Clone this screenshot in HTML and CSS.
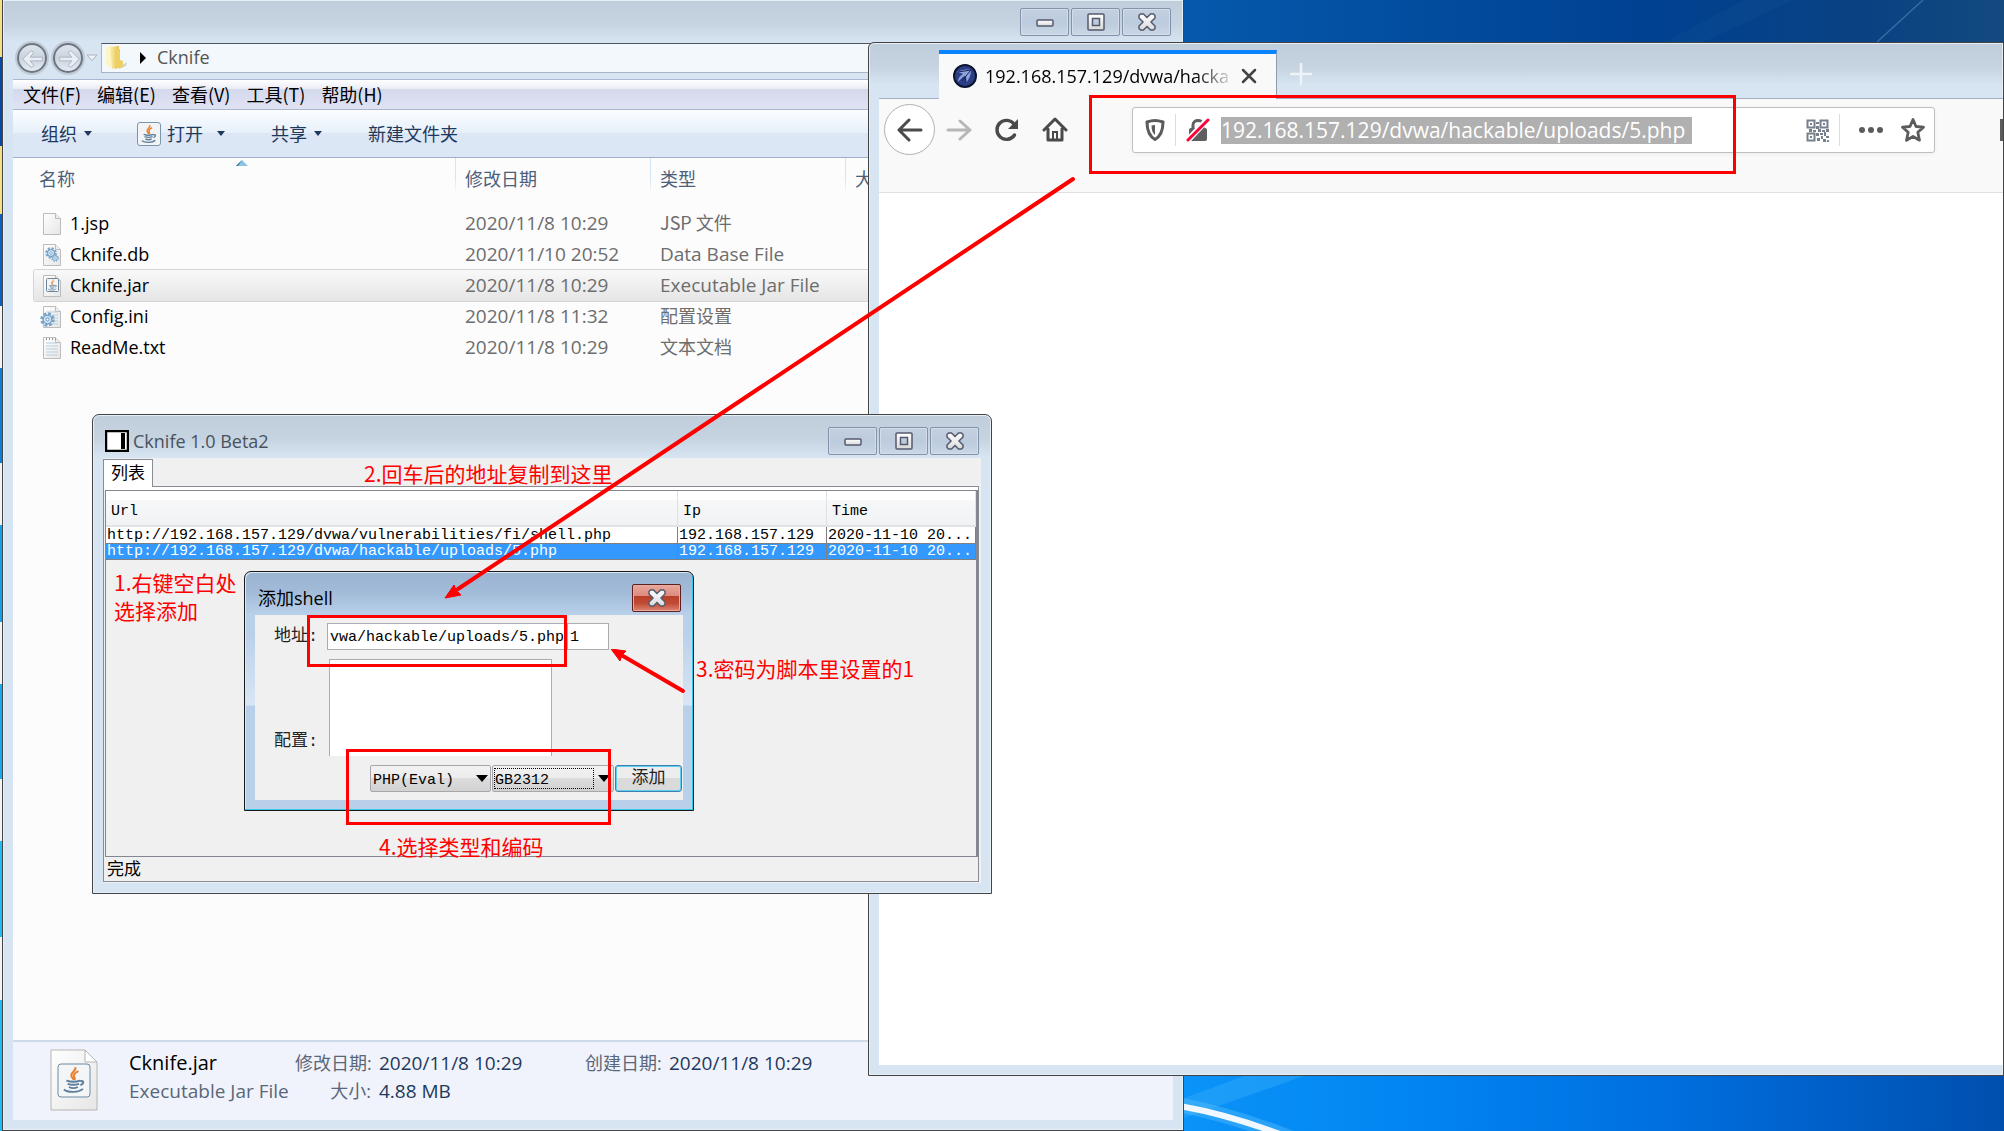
FILE: index.html
```html
<!DOCTYPE html>
<html lang="zh-CN">
<head>
<meta charset="utf-8">
<title>Cknife</title>
<link rel="stylesheet" href="styles.css">
</head>
<body>
<svg class="defs" width="0" height="0" aria-hidden="true">
  <defs>
    <linearGradient id="glyph" x1="0" y1="0" x2="0" y2="1"><stop offset="0" stop-color="#fff"/><stop offset="1" stop-color="#d9d9d9"/></linearGradient>
    <linearGradient id="paper" x1="0" y1="0" x2="1" y2="1"><stop offset="0" stop-color="#fff"/><stop offset="1" stop-color="#e6e6e6"/></linearGradient>
    <linearGradient id="gold" x1="0" y1="0" x2="1" y2="0"><stop offset="0" stop-color="#fbeeae"/><stop offset="1" stop-color="#e5c34a"/></linearGradient>
    <symbol id="i-min" viewBox="0 0 18 18"><rect x="1" y="7" width="16" height="6" rx="1" fill="url(#glyph)" stroke="#555a6e" stroke-width="1.500"/></symbol>
    <symbol id="i-max" viewBox="0 0 18 18"><path d="M1 2q0-1 1-1h14q1 0 1 1v14q0 1-1 1h-14q-1 0-1-1zM5.500 5.500v7h7v-7z" fill="url(#glyph)" fill-rule="evenodd" stroke="#555a6e" stroke-width="1.500"/></symbol>
    <symbol id="i-close" viewBox="0 0 18 18"><path d="M1 2.500l1.500-1.500h3l3.500 3.500 3.500-3.500h3l1.500 1.500v2.500l-4 4 4 4v2.500l-1.500 1.500h-3l-3.500-3.500-3.500 3.500h-3l-1.500-1.500v-2.500l4-4-4-4z" fill="url(#glyph)" stroke="#555a6e" stroke-width="1.500"/></symbol>
    <symbol id="i-cup" viewBox="0 0 20 22">
      <path d="M11 1c1 3-4 4-3 7 .5 1.500 1.500 2 2 3M13.500 4c-2 1-4 2-3.500 4 .3 1 1 1.500.5 3" fill="none" stroke="#e8802e" stroke-width="1.600"/>
      <path d="M4 11.500c3 1 8 1 11 0M5 14c3 1 6 1 9 0M6 16.500c2 1 5 1 7 0M15 12c3-1 3 2 0 3M2 18.500c3 2.500 12 2.500 15-.5" fill="none" stroke="#5d7f9c" stroke-width="1.500"/>
    </symbol>
    <symbol id="i-page" viewBox="0 0 18 22"><path d="M.5.500h12l5 5v16H.5z" fill="url(#paper)" stroke="#bcbcbc"/><path d="M12.500.5v5h5" fill="#eee" stroke="#bcbcbc"/></symbol>
    <symbol id="i-gear" viewBox="0 0 14 14"><circle cx="7" cy="7" r="5.500" fill="none" stroke="#7aa5c8" stroke-width="2.500" stroke-dasharray="2.600 1.700"/><circle cx="7" cy="7" r="4" fill="#dcebf6" stroke="#7aa5c8" stroke-width="1.500"/><circle cx="7" cy="7" r="1.500" fill="#fff" stroke="#7aa5c8"/></symbol>
  </defs>
</svg>

<main class="desktop">
  <svg class="streaks" aria-hidden="true" width="820" height="42" viewBox="0 0 820 42"><path d="M693 42L739 0" stroke="#5c93bf" stroke-width="1.500" opacity=".5"/><path d="M480 42L560 0h50L520 42z" fill="#1b5f9d" opacity=".15"/></svg>
  <svg class="swoosh" aria-hidden="true" width="200" height="55" viewBox="0 0 200 55"><path d="M0 22L60 0h60L0 42z" fill="#38b0fb" opacity=".4"/><path d="M-5 29Q45 38 112 64" fill="none" stroke="#5cc0fc" stroke-width="15" opacity=".4"/><path d="M-5 30Q45 38 112 64" fill="none" stroke="#f2f8ff" stroke-width="6"/></svg>
  <div class="edge-icons"></div>

  <section class="window explorer" aria-label="Cknife">
    <header class="titlebar">
      <div class="controls">
        <button class="ctl" aria-label="最小化"><svg><use href="#i-min"/></svg></button>
        <button class="ctl" aria-label="最大化"><svg><use href="#i-max"/></svg></button>
        <button class="ctl" aria-label="关闭"><svg><use href="#i-close"/></svg></button>
      </div>
    </header>
    <nav class="navrow">
      <div class="travel">
        <button class="round" aria-label="后退"><svg width="28" height="28" viewBox="0 0 30 30"><path d="M4 15l9-9 3 2-4 5h13v4H12l4 5-3 2z" fill="#e9eef4" stroke="#aab3be"/></svg></button>
        <button class="round" aria-label="前进"><svg width="28" height="28" viewBox="0 0 30 30"><path d="M26 15l-9-9-3 2 4 5H5v4h13l-4 5 3 2z" fill="#e9eef4" stroke="#aab3be"/></svg></button>
        <button class="drop" aria-label="最近的页面"><svg viewBox="0 0 12 8"><path d="M1 1h10L6 6.500z" fill="#eef3f8" stroke="#a9b4c0"/></svg></button>
      </div>
      <div class="address">
        <svg width="24" height="26" viewBox="0 0 24 26"><path d="M14 22l8-5-1 4-7 3z" fill="#bbb" opacity=".6"/><path d="M1 2l6-1v22l-6-3z" fill="#fdf5c4"/><path d="M5 2l9-1v21l-7 2z" fill="url(#gold)"/><path d="M10 5l5-1v11l3 1v6l-8 2z" fill="#ecd063"/></svg>
        <svg class="crumb" width="7" height="12" viewBox="0 0 7 12"><path d="M0 0l6 6-6 6z" fill="#000"/></svg>
        <span>Cknife</span>
      </div>
    </nav>
    <div class="client">
      <div class="menubar"><button>文件(F)</button><button>编辑(E)</button><button>查看(V)</button><button>工具(T)</button><button>帮助(H)</button></div>
      <div class="toolbar">
        <button class="organize">组织<i class="caret"></i></button>
        <button class="open"><span class="java"><svg width="18" height="20"><use href="#i-cup"/></svg></span>打开<i class="caret wide"></i></button>
        <button class="share">共享<i class="caret"></i></button>
        <button>新建文件夹</button>
      </div>
      <div class="listing">
        <svg class="sort" width="12" height="7" viewBox="0 0 12 7"><path d="M6 0l6 6H0z" fill="#8ac6e4"/><path d="M6 0L0 6h2z" fill="#2f6f93"/></svg>
        <table class="files">
          <colgroup><col class="c-name"><col class="c-date"><col class="c-type"><col></colgroup>
          <thead><tr><th>名称</th><th>修改日期</th><th>类型</th><th>大小</th></tr></thead>
          <tbody>
            <tr><td><svg class="ficon"><use href="#i-page"/></svg>1.jsp</td><td>2020/11/8 10:29</td><td><span class="cjk">JSP 文件</span></td><td></td></tr>
            <tr><td><svg class="ficon" viewBox="0 0 18 22"><use href="#i-page"/><use href="#i-gear" x="2" y="3" width="12" height="12"/><use href="#i-gear" x="8" y="10" width="8" height="8"/></svg>Cknife.db</td><td>2020/11/10 20:52</td><td>Data Base File</td><td></td></tr>
            <tr class="selected"><td><svg class="ficon" viewBox="0 0 18 22"><use href="#i-page"/><rect x="3.500" y="3.500" width="12" height="13" rx="1" fill="#f4f7fa" stroke="#6d8498"/><use href="#i-cup" x="4" y="4" width="11" height="12"/></svg>Cknife.jar</td><td>2020/11/8 10:29</td><td>Executable Jar File</td><td></td></tr>
            <tr><td><svg class="ficon" viewBox="0 0 18 22"><use href="#i-page"/><path d="M3 6h12M3 9h12M3 12h12M3 15h12M3 18h12" stroke="#b7cfdd"/><use href="#i-gear" x="-3" y="6" width="15" height="15"/></svg>Config.ini</td><td>2020/11/8 11:32</td><td><span class="cjk">配置设置</span></td><td></td></tr>
            <tr><td><svg class="ficon" viewBox="0 0 18 22"><use href="#i-page"/><path d="M3 6h12M3 9h12M3 12h12M3 15h12M3 18h12" stroke="#b7cfdd"/><path d="M3 2h10" stroke="#999" stroke-dasharray="1 2" stroke-width="2"/></svg>ReadMe.txt</td><td>2020/11/8 10:29</td><td><span class="cjk">文本文档</span></td><td></td></tr>
          </tbody>
        </table>
      </div>
      <footer class="details">
        <svg class="bigicon" width="48" height="62" viewBox="0 0 48 62"><path d="M1 1h34l12 13v47H1z" fill="url(#paper)" stroke="#b4b4b4"/><path d="M35 1v12h12z" fill="#fff" stroke="#b4b4b4"/><rect x="8" y="15" width="32" height="33" rx="3" fill="#f3f5f7" stroke="#6d8ba3"/><use href="#i-cup" x="11" y="17" width="26" height="28"/></svg>
        <b class="fname">Cknife.jar</b><span class="lbl">修改日期:</span><span class="val">2020/11/8 10:29</span><span class="lbl">创建日期:</span><span class="val">2020/11/8 10:29</span>
        <span class="ftype">Executable Jar File</span><span class="lbl">大小:</span><span class="val">4.88 MB</span>
      </footer>
    </div>
  </section>

  <section class="window browser" aria-label="浏览器">
    <div class="tabs">
      <div class="tab">
        <svg width="24" height="24" viewBox="0 0 24 24"><circle cx="12" cy="12" r="11" fill="#2c3f86" stroke="#0d1430" stroke-width="2"/><path d="M4 8c4-2 9-3 14-2 0 5-2 9-5 13 1-4 0-6-1-7-3 1-5 4-7 6 0-4 2-6 5-8-2-1-4-2-6-2z" fill="#8fa3dd"/><path d="M5 8l13-2-9 11M12 12l1 7" fill="none" stroke="#16225a"/></svg>
        <span class="tabtitle">192.168.157.129/dvwa/hacka</span>
        <button aria-label="关闭标签页"><svg width="16" height="16" viewBox="0 0 16 16"><path d="M2 2l12 12M14 2L2 14" stroke="#444" stroke-width="2.500" stroke-linecap="round"/></svg></button>
      </div>
      <button class="newtab" aria-label="新标签页"><svg width="22" height="22" viewBox="0 0 22 22"><path d="M11 1v20M1 11h20" stroke="#eef3f8" stroke-width="2.500" stroke-linecap="round"/></svg></button>
    </div>
    <div class="urlrow">
      <button class="back" aria-label="后退"><svg width="26" height="26" viewBox="0 0 26 26"><path d="M24 13H3M12 3L2 13l10 10" fill="none" stroke="#4a4a4c" stroke-width="3" stroke-linecap="round" stroke-linejoin="round"/></svg></button>
      <button class="tool" aria-label="前进"><svg width="26" height="26" viewBox="0 0 26 26"><path d="M2 13h21M14 4l10 9-10 9" fill="none" stroke="#b7b7b8" stroke-width="3" stroke-linecap="round" stroke-linejoin="round"/></svg></button>
      <button class="tool" aria-label="刷新"><svg width="26" height="26" viewBox="0 0 26 26"><path d="M20.500 18A9.500 9.500 0 1 1 20 7" fill="none" stroke="#4a4a4c" stroke-width="3.400" stroke-linecap="round"/><path d="M24 2v10H14z" fill="#4a4a4c"/></svg></button>
      <button class="tool" aria-label="主页"><svg width="26" height="26" viewBox="0 0 26 26"><path d="M2 13L13 2l11 11M6 12v11h14V12" fill="none" stroke="#4a4a4c" stroke-width="3" stroke-linecap="round" stroke-linejoin="round"/><path d="M11 23v-8h4v8" fill="none" stroke="#4a4a4c" stroke-width="2"/></svg></button>
      <div class="urlbar">
        <svg width="20" height="22" viewBox="0 0 20 22"><path d="M10 1.500c3 0 5 .5 8 1.500 0 9-2 14-8 17.500C4 17 2 12 2 3c3-1 5-1.500 8-1.500z" fill="none" stroke="#5b5b5d" stroke-width="3"/><path d="M10 6v10c-2.500-2-3.500-5-3.500-9.500z" fill="#5b5b5d"/></svg>
        <i class="sep"></i>
        <svg class="lock" width="24" height="24" viewBox="0 0 24 24"><path d="M7 11V7c0-6 10-6 10 0v4" fill="none" stroke="#5f5f61" stroke-width="3"/><rect x="3" y="10" width="18" height="13" rx="2" fill="#5f5f61"/><path d="M1 23L22 1" stroke="#fff" stroke-width="6"/><path d="M2 22L22 2" stroke="#ff0039" stroke-width="3" stroke-linecap="round"/></svg>
        <input class="url" aria-label="地址栏" value="192.168.157.129/dvwa/hackable/uploads/5.php">
        <svg class="qr" width="23" height="23" viewBox="0 0 23 23"><path d="M1.500 1.500h7v7h-7zM14.500 1.500h7v7h-7zM1.500 14.500h7v7h-7z" fill="#fff" stroke="#76808c" stroke-width="2"/><path d="M4 4h2v2H4zM17 4h2v2h-2zM4 17h2v2H4zM10 3h3v2h-3zM10 7h3v3h-3zM3 10h3v3H3zM7 11h3v2H7zM12 10h3v3h-3zM16 11h3v2h-3zM20 10h3v3h-3zM10 14h3v3h-3zM14 14h3v2h-3zM18 13h2v4h-2zM11 19h3v3h-3zM15 17h2v3h-2zM20 17h3v2h-3zM17 20h3v3h-3zM21 21h2v2h-2z" fill="#76808c"/></svg>
        <i class="sep"></i>
        <svg class="dots" width="24" height="6" viewBox="0 0 24 6"><circle cx="3" cy="3" r="3"/><circle cx="12" cy="3" r="3"/><circle cx="21" cy="3" r="3"/></svg>
        <svg width="24" height="26" viewBox="0 0 24 26"><path d="M12 2.500l3 7 7.500.7-5.700 5 1.700 8L12 19.500l-6.500 3.700 1.700-8-5.700-5L9 9.500z" fill="none" stroke="#5b5b5d" stroke-width="2.800" stroke-linejoin="round"/></svg>
      </div>
      <i class="library"></i>
    </div>
    <div class="page"></div>
  </section>

  <section class="window cknife" aria-label="Cknife 1.0 Beta2">
    <header class="titlebar">
      <svg width="24" height="22" viewBox="0 0 24 22"><rect x="1" y="1" width="22" height="20" fill="#fff" stroke="#000" stroke-width="2.500"/><path d="M18 3v16" stroke="#000" stroke-width="4"/></svg>
      <h1>Cknife 1.0 Beta2</h1>
      <div class="controls">
        <button class="ctl" aria-label="最小化"><svg><use href="#i-min"/></svg></button>
        <button class="ctl" aria-label="最大化"><svg><use href="#i-max"/></svg></button>
        <button class="ctl" aria-label="关闭"><svg><use href="#i-close"/></svg></button>
      </div>
    </header>
    <div class="swing">
      <button class="listtab">列表</button>
      <div class="panel">
        <div class="grid">
          <table class="shells">
            <colgroup><col><col class="c-ip"><col class="c-ip"></colgroup>
            <thead><tr><th>Url</th><th>Ip</th><th>Time</th></tr></thead>
            <tbody>
              <tr><td>http://192.168.157.129/dvwa/vulnerabilities/fi/shell.php</td><td>192.168.157.129</td><td>2020-11-10 20...</td></tr>
              <tr class="active"><td>http://192.168.157.129/dvwa/hackable/uploads/5.php</td><td>192.168.157.129</td><td>2020-11-10 20...</td></tr>
            </tbody>
          </table>
        </div>
        <div class="status">完成</div>
      </div>
    </div>
  </section>

  <section class="window dialog" role="dialog" aria-label="添加shell">
    <header class="titlebar">
      <h2>添加shell</h2>
      <div class="controls"><button class="ctl red" aria-label="关闭"><svg><use href="#i-close"/></svg></button></div>
    </header>
    <form class="form">
      <div class="line"><label for="addr">地址:</label><input id="addr" class="addr" value="vwa/hackable/uploads/5.php"><input class="pass" aria-label="密码" value="1"></div>
      <div class="line conf"><label for="conf">配置:</label><textarea id="conf"></textarea></div>
      <div class="actions">
        <select aria-label="类型"><option>PHP(Eval)</option></select>
        <span class="focused"><select aria-label="编码"><option>GB2312</option></select></span>
        <button type="button" class="add">添加</button>
      </div>
    </form>
  </section>

  <div class="mark mark-url"></div>
  <div class="mark mark-addr"></div>
  <div class="mark mark-type"></div>
  <svg class="arrow arrow-long" width="632" height="426" viewBox="0 0 632 426" aria-hidden="true"><path d="M629 3L14 413" stroke="#f00" stroke-width="4" stroke-linecap="round"/><path d="M1 422l9-13 2 5 5 5z" fill="#f00" stroke="#f00"/></svg>
  <svg class="arrow arrow-short" width="76" height="46" viewBox="0 0 76 46" aria-hidden="true"><path d="M72 42L12 7" stroke="#f00" stroke-width="4" stroke-linecap="round"/><path d="M0 0l15 2-4 4-2 6z" fill="#f00" stroke="#f00"/></svg>
  <p class="note note-1">1.右键空白处<br>选择添加</p>
  <p class="note note-2">2.回车后的地址复制到这里</p>
  <p class="note note-3">3.密码为脚本里设置的1</p>
  <p class="note note-4">4.选择类型和编码</p>
</main>
</body>
</html>
```

FILE: styles.css
```css
* { box-sizing: border-box; }
html, body { height: 100%; margin: 0; }
body { font: 18px/28px "Open Sans", "Noto Sans CJK SC", sans-serif; color: #000; overflow: hidden; }
button, input, select, textarea { font: inherit; color: inherit; margin: 0; padding: 0; border: 0; background: none; outline: 0; }
button { white-space: nowrap; }
h1, h2, p { margin: 0; font-weight: 400; }
svg { display: block; flex: none; }
i { display: block; flex: none; }
.defs { position: absolute; }

.desktop {
  position: relative; height: 100%; overflow: hidden;
  background:
    linear-gradient(90deg, #0558ab 60%, #004192 82%, #0a4182 93%, #124a80) 0 0 / 100% 42px no-repeat,
    linear-gradient(90deg, #0a93f8 59%, #0286f2 70%, #006fe0 83%, #004fae) 0 0 / 100% 100%;
}
.streaks { position: absolute; top: 0; right: 0; }
.swoosh { position: absolute; left: 1184px; bottom: 0; }
.edge-icons {
  position: absolute; left: 0; top: 0; bottom: 0; width: 2px;
  background: linear-gradient(#f3df86 57px, #0a48a8 57px 146px, #f3df86 146px 214px, #0a60c4 214px 306px, #f4f4f4 306px 368px, #0a80dc 368px 463px, #f4f4f4 463px 525px, #12a0ea 525px 622px, #f4f4f4 622px 684px, #18aaf0 684px 779px, #f4f4f4 779px 841px, #22bcf4 841px 937px, #f4f4f4 937px 1000px, #22bcf4 1000px);
}

/* window frames */
.window {
  position: absolute; display: flex; flex-direction: column; padding: 0 10px 10px;
  border: 1px solid #444; border-radius: 7px 7px 0 0;
  background: linear-gradient(#c0cddb, #c6d3e1 24px, #d7e4f1 42px);
  box-shadow: inset 0 0 0 1px #e6eef6;
}
.titlebar { display: flex; flex: none; align-items: center; height: 43px; padding: 8px 2px 0; color: #48525e; }
.controls { display: flex; gap: 2px; margin-left: auto; }
.ctl {
  display: grid; place-items: center; width: 49px; height: 28px;
  border: 1px solid #8391aa; border-radius: 2px;
  background: linear-gradient(#c3d0e0, #bccbdd 50%, #c9d7e6);
  box-shadow: inset 0 0 0 1px #d3deea;
}
.ctl svg { width: 18px; height: 18px; }
.ctl.red { border-color: #5c1f22; background: linear-gradient(#e8a79c, #dd8b7e 42%, #b93f27 44%, #c24a35 70%, #dc8570); box-shadow: inset 0 0 0 1px #e9ab9f; }

/* file explorer */
.explorer { left: 2px; top: 0; bottom: 0; width: 1182px; border-top: 0; border-radius: 0; }
.explorer .titlebar { align-items: flex-start; }
.navrow { display: flex; flex: none; height: 36px; }
.travel { display: flex; width: 88px; height: 30px; align-items: center; padding-left: 4px; gap: 6px; }
.round { display: grid; place-items: center; width: 30px; height: 30px; border: 2px solid #6d7680; border-radius: 50%; background: linear-gradient(#dfe5ec, #c9d3de 50%, #e4ebf3); box-shadow: 0 0 0 2px #bfcad6; }
.drop { width: 12px; margin-left: -3px; }
.address { display: flex; flex: 1; align-items: center; height: 30px; padding-left: 3px; border: 1px solid #a9b5c2; border-top-color: #4d565f; background: #f3f8fc; color: #545454; line-height: 26px; }
.address span { padding-bottom: 2px; }
.crumb { margin: 0 10px 0 11px; }
.client { display: flex; flex: 1; flex-direction: column; min-height: 0; background: #fcfcfc; }
.menubar { display: flex; flex: none; align-items: flex-start; gap: 16px; height: 31px; padding: 0 10px; border: solid #a9b8cf; border-width: 1px 0; background: linear-gradient(#fff, #e9ecf5 9px, #d5d9ec 9px, #dfe3f3); font-family: "Noto Sans CJK SC", sans-serif; }
.toolbar { display: flex; flex: none; height: 48px; padding-left: 28px; border-bottom: 1px solid #a0afc8; background: linear-gradient(#fbfdff, #e6f0fa 23px, #dce6f4 23px, #dce7f5); color: #1e395b; }
.toolbar button { display: flex; align-items: center; }
.caret { border: 4px solid transparent; border-top: 5px solid #1e395b; border-bottom: 0; margin-left: 7px; }
.caret.wide { margin-left: 14px; }
.organize { margin-right: 45px; }
.open { margin-right: 46px; }
.share { margin-right: 46px; }
.java { display: grid; place-items: center; width: 24px; height: 24px; margin-right: 6px; border: 1px solid #7d95aa; border-radius: 3px; background: #f3f4f6; }
.listing { position: relative; flex: 1; padding-left: 21px; }
.sort { position: absolute; left: 223px; top: 2px; }
.files { width: 100%; table-layout: fixed; border-spacing: 0; }
.c-name { width: 421px; }
.c-date, .c-type { width: 195px; }
.files th { height: 50px; padding: 7px 0 0 10px; vertical-align: top; text-align: left; font-weight: 400; color: #4c607a; background: linear-gradient(#d5e4f2, #d5e4f2 20px, transparent 36px) 0 0 / 1px 100% no-repeat; }
.files th:first-child { padding-left: 5px; background: none; }
.files td { height: 31px; padding: 0 0 0 10px; line-height: 29px; font-size: 19px; color: #6d6d6d; white-space: nowrap; }
.files td:first-child { padding-left: 36px; font-size: 18px; color: #000; position: relative; }
.cjk { font: 18px "Noto Sans CJK SC", sans-serif; }
.ficon { position: absolute; left: 9px; top: 5px; width: 18px; height: 22px; overflow: visible; }
.selected { background: linear-gradient(#f9f9f9, #e5e5e5); box-shadow: 0 0 0 1px #d5d5d5; border-radius: 2px; }
.details { display: grid; flex: none; grid-template: 28px 28px / 79px 166px 84px 206px 84px 1fr; height: 80px; padding: 7px 0 0 37px; border-top: 2px solid #ccdaea; background: #f0f3fb; line-height: 28px; white-space: nowrap; }
.bigicon { grid-row: span 2; }
.fname { font-size: 20px; font-weight: 400; }
.ftype { font-size: 19px; }
.ftype, .lbl { color: #5a6779; }
.lbl { padding-right: 8px; text-align: right; }
.val { font-size: 19px; color: #1e395b; }

/* browser */
.browser { left: 868px; right: 0; top: 42px; bottom: 55px; padding-right: 0; border-radius: 6px 0 0 0; }
.tabs { display: flex; flex: none; height: 56px; padding: 7px 0 0 60px; border-bottom: 1px solid #a3afc3; }
.tab { display: flex; align-items: center; width: 338px; height: 49px; padding: 0 0 2px 14px; border-top: 4px solid #0a84ff; border-right: 1px solid #8f9bab; background: #f9f9fa; }
.tabtitle { width: 250px; margin: 0 6px 0 8px; white-space: nowrap; -webkit-mask-image: linear-gradient(90deg, #000 210px, transparent); mask-image: linear-gradient(90deg, #000 210px, transparent); }
.newtab { margin-left: 13px; height: 48px; }
.urlrow { display: flex; flex: none; align-items: flex-start; height: 94px; padding: 5px 0 0 5px; border-bottom: 1px solid #e0e0e1; background: #f9f9fa; }
.back { display: grid; place-items: center; width: 51px; height: 51px; margin-right: 10px; border: 1px solid #b1b1b3; border-radius: 50%; background: #fff; }
.tool { display: grid; place-items: center; width: 28px; height: 51px; margin-right: 20px; }
.urlbar { display: flex; flex: 1; align-items: center; height: 46px; margin: 3px 65px 0 43px; padding: 0 9px 0 12px; border: 1px solid #bfbfc1; border-radius: 3px; background: #fff; box-shadow: 0 1px 4px #0000000d; }
.sep { width: 1px; height: 32px; margin-left: 10px; background: #dcdcdd; }
.lock { margin: 0 11px 0 10px; }
.url { width: 471px; height: 27px; background: #b0b0b0; color: #fff; font-size: 21px; line-height: 27px; }
.qr { margin-left: auto; }
.dots { margin: 0 18px 0 19px; fill: #5b5b5d; }
.library { width: 3px; height: 22px; margin-top: 15px; background: #5b5b5d; }
.page { flex: 1; background: #fff; }

/* Cknife main window */
.cknife { left: 92px; top: 414px; width: 900px; height: 480px; }
.titlebar h1, .titlebar h2 { margin-left: 4px; font-size: 18px; line-height: 28px; }
.cknife .controls { padding-top: 1px; }
.swing { display: flex; flex: 1; flex-direction: column; align-items: stretch; min-height: 0; padding: 1px 2px 1px 0; background: #f0f0f0; font: 15px/16px "Liberation Mono", "Noto Sans CJK SC", monospace; }
.listtab { position: relative; z-index: 1; width: 50px; height: 28px; padding-top: 2px; border: 1px solid #898c95; border-bottom: 0; background: #fff; font-size: 17px; }
.panel { display: flex; flex: 1; flex-direction: column; margin-top: -1px; padding: 3px 0 0 1px; border: 1px solid #898c95; background: linear-gradient(#fff 4px, #f0f0f0 4px); }
.grid { flex: 1; border: 1px solid #828790; border-right-width: 2px; }
.shells { width: 100%; table-layout: fixed; border-spacing: 0; }
.c-ip { width: 149px; }
.shells th { height: 36px; padding: 8px 0 0 5px; text-align: left; font-weight: 400; border-right: 1px solid #dfe1e4; border-bottom: 2px solid #e0e2e5; background: linear-gradient(#fff 9px, #f7f8fa 9px, #f1f2f4); }
.shells td { height: 16px; padding: 0 1px; overflow: hidden; line-height: 15px; white-space: nowrap; border-bottom: 1px solid #808080; border-right: 1px solid #808080; background: #fff; }
.shells tbody tr:first-child td { height: 17px; padding-top: 1px; }
.shells .active td { background: #39f; color: #fff; }
.status { flex: none; height: 24px; padding-left: 2px; line-height: 27px; font-size: 17px; }

/* dialog */
.dialog { left: 244px; top: 571px; width: 450px; height: 240px; border-color: #1a1a1a; background: linear-gradient(#9ab3d0, #a3bcd9 22px, #b9d0ea 42px, #b9d0ea 60px, #d9e6f5 133px, #b9d0ea 134px); box-shadow: inset -1px -1px #33c7e8, inset 1px 1px #dbe8f5; }
.dialog .titlebar { color: #000; }
.dialog .titlebar h2 { margin-left: 1px; }
.dialog .controls { padding-top: 1px; }
.form { flex: 1; padding: 8px 1px 0 19px; background: #f0f0f0; font: 15px/25px "Liberation Mono", "Noto Sans CJK SC", monospace; color: #222; }
.line { display: flex; }
.line label { width: 53px; font-size: 17px; line-height: 28px; }
.addr, .pass { height: 27px; padding: 2px 0 0 2px; border: 1px solid #abadb3; background: #fff; color: #000; }
.addr { width: 240px; }
.pass { width: 42px; }
.conf { align-items: flex-end; height: 97px; margin-top: 8px; }
.conf label { width: 55px; }
.conf textarea { width: 223px; height: 97px; border: 1px solid #abadb3; border-bottom: 0; background: #fff; resize: none; }
.actions { display: flex; justify-content: flex-end; gap: 1px; margin-top: 9px; }
.actions select {
  width: 121px; height: 27px; padding: 2px 0 0 2px; appearance: none; border: 1px solid #a6a6ac; border-radius: 2px; color: #000;
  background:
    url("data:image/svg+xml,%3Csvg xmlns='http://www.w3.org/2000/svg' width='12' height='7'%3E%3Cpath d='M0 0h12L6 7z'/%3E%3C/svg%3E") right 2px center / 12px 7px no-repeat,
    linear-gradient(#f3f3f3, #ebebeb 50%, #dcdcdc 50%, #d2d2d2);
}
.focused { position: relative; display: flex; }
.actions .focused select { width: 122px; background-position: right 3px center, 0 0; }
.focused::after { content: ""; position: absolute; inset: 3px 20px 3px 2px; border: 1px dotted #000; pointer-events: none; }
.add { width: 67px; height: 27px; border: 1px solid #3c7fb1; border-radius: 3px; background: linear-gradient(#ededed 50%, #dadada 50%); box-shadow: inset 0 0 0 1px #5ad0ee; font-size: 17px; }

/* red annotations */
.mark { position: absolute; border: 3px solid #f00; }
.mark-url { left: 1089px; top: 95px; width: 647px; height: 79px; }
.mark-addr { left: 307px; top: 615px; width: 260px; height: 52px; }
.mark-type { left: 346px; top: 749px; width: 265px; height: 76px; }
.arrow { position: absolute; }
.arrow-long { left: 444px; top: 176px; }
.arrow-short { left: 611px; top: 649px; }
.note { position: absolute; color: #f00; font: 21px/28px "Noto Sans CJK SC", sans-serif; white-space: nowrap; }
.note-1 { left: 114px; top: 568px; }
.note-2 { left: 364px; top: 459px; }
.note-3 { left: 696px; top: 654px; }
.note-4 { left: 379px; top: 832px; }
```
